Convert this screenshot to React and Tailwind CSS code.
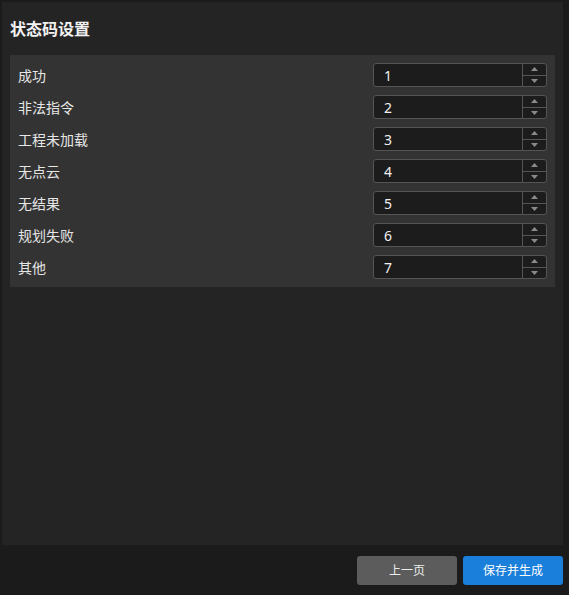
import React from "react";

const rows = [
  ["成功", "1"],
  ["非法指令", "2"],
  ["工程未加载", "3"],
  ["无点云", "4"],
  ["无结果", "5"],
  ["规划失败", "6"],
  ["其他", "7"],
];

function Spin() {
  return (
    <div className="w-[24px] h-full flex flex-col border-l border-[#555]">
      <div className="flex-1 flex items-center justify-center border-b border-[#555]">
        <svg width="7" height="4" viewBox="0 0 7 4"><path d="M3.5 0L7 4H0z" fill="#8a8a8a" /></svg>
      </div>
      <div className="flex-1 flex items-center justify-center">
        <svg width="7" height="4" viewBox="0 0 7 4"><path d="M0 0h7L3.5 4z" fill="#8a8a8a" /></svg>
      </div>
    </div>
  );
}

export default function App() {
  return (
    <div
      className="w-[569px] h-[595px] bg-[#1b1b1b] flex flex-col text-white"
      style={{ fontFamily: '"Noto Sans", "Noto Sans CJK SC", sans-serif' }}
    >
      <div className="ml-[2px] mt-[2px] w-[561px] h-[543px] bg-[#242424] px-2">
        <div className="h-[53px] flex items-center text-[16px] font-bold text-[#f2f2f2]">状态码设置</div>
        <div className="bg-[#333333] py-[4px] pl-2 pr-2">
          {rows.map(([label, val]) => (
            <div key={label} className="h-[32px] flex items-center justify-between">
              <span className="text-[14px] text-[#e6e6e6] pt-[1px]">{label}</span>
              <div className="w-[174px] h-[24px] flex bg-[#1c1c1c] border border-[#555] rounded-[3px]">
                <div className="flex-1 flex items-center pl-[10px] text-[14px] text-[#f0f0f0]">{val}</div>
                <Spin />
              </div>
            </div>
          ))}
        </div>
      </div>
      <div className="flex justify-end gap-[6px] pr-[6px] mt-[11px]">
        <button className="w-[100px] h-[29px] bg-[#5c5c5c] rounded-[3px] text-[12px] text-[#ececec]">上一页</button>
        <button className="w-[100px] h-[29px] bg-[#1a7edb] rounded-[3px] text-[12px] text-white">保存并生成</button>
      </div>
    </div>
  );
}
